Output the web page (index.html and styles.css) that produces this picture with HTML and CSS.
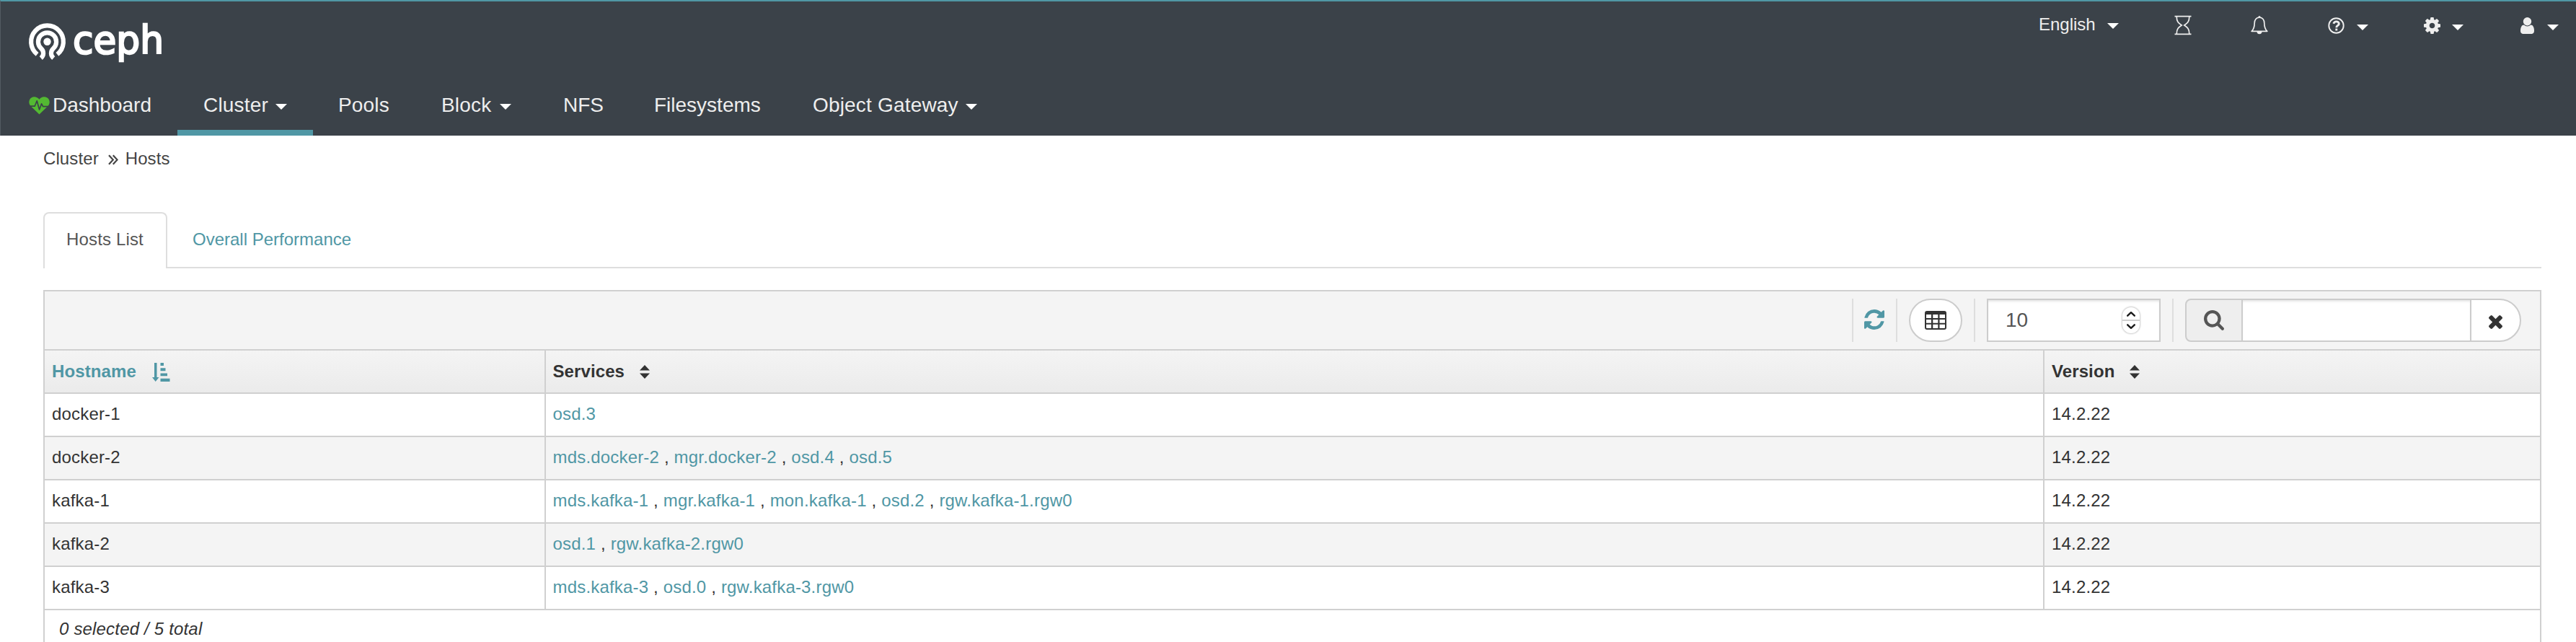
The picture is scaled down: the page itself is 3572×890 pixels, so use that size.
FILE: index.html
```html
<!DOCTYPE html>
<html lang="en">
<head>
<meta charset="utf-8">
<title>Ceph</title>
<link rel="stylesheet" href="styles.css">
</head>
<body>
<header class="header">
  <div class="topbar">
    <svg class="logo" width="194" height="66" viewBox="38 25 194 66">
      <g fill="none" stroke="#fff" stroke-width="6.2">
        <path d="M51.6 75.4A22.4 22.4 0 1 1 79.4 75.4"/>
        <path d="M56.8 80.6C61 77 61.2 71 57.2 67.4A12.6 12.6 0 1 1 73.8 67.4C69.8 71 70 77 74.2 80.6"/>
      </g>
      <circle cx="65.5" cy="57.8" r="5.2" fill="#fff"/>
      <text class="logo-text" x="101" y="74" textLength="126" lengthAdjust="spacingAndGlyphs">ceph</text>
    </svg>
    <div class="utils">
      <span class="lang">English</span><i class="caret lang-caret"></i>
      <svg class="u-task" width="24" height="28" viewBox="0 0 24 28" fill="none" stroke="#eee" stroke-width="1.7"><path d="M.5 1.7h23M.5 26.3h23M3.2 2c0 7 2.5 9 7 12-4.500 3-7 5-7 12M20.800 2c0 7-2.500 9-7 12 4.500 3 7 5 7 12"/></svg>
      <svg class="u-bell" width="24" height="28" viewBox="0 0 24 28"><path d="M12 3.200C7.500 3.200 5.200 6.600 5.200 11c0 6-1.500 9-4 11.300h21.600c-2.500-2.300-4-5.300-4-11.300 0-4.400-2.300-7.800-6.800-7.800z" fill="none" stroke="#eee" stroke-width="1.700" stroke-linejoin="round"/><circle cx="12" cy="2.400" r="1.500" fill="#eee"/><path d="M8.500 22.500h7a3.500 3.800 0 0 1-7 0z" fill="#eee"/></svg>
      <svg class="u-help" width="23" height="23" viewBox="0 0 23 23" fill="none" stroke="#eee"><circle cx="11.500" cy="11.500" r="10.200" stroke-width="1.900"/><path d="M7.700 8.800C8.500 6.700 9.900 5.900 11.600 5.900c2 0 3.700 1.200 3.700 3 0 2.600-3.500 2.500-3.500 5.300" stroke-width="2.900"/><path d="M11.800 15.600v2.900" stroke-width="2.900"/></svg><i class="caret"></i>
      <svg class="u-cog" width="23" height="23" viewBox="128 128 1536 1536" fill="#eee"><path d="M1152 896q0-106-75-181t-181-75-181 75-75 181 75 181 181 75 181-75 75-181zm512-109v222q0 12-8 23t-20 13l-185 28q-19 54-39 91 35 50 107 138 10 12 10 25t-9 23q-27 37-99 108t-94 71q-12 0-26-9l-138-108q-44 23-91 38-16 136-29 186-7 28-36 28h-222q-14 0-24.500-8.500t-11.500-21.500l-28-184q-49-16-90-37l-141 107q-10 9-25 9-14 0-25-11-126-114-165-168-7-10-7-23 0-12 8-23 15-21 51-66.500t54-70.500q-27-50-41-99l-183-27q-13-2-21-12.500t-8-23.500v-222q0-12 8-23t19-13l186-28q14-46 39-92-40-57-107-138-10-12-10-24 0-10 9-23 26-36 98.500-107.500t94.500-71.500q13 0 26 10l138 107q44-23 91-38 16-136 29-186 7-28 36-28h222q14 0 24.500 8.500t11.500 21.500l28 184q49 16 90 37l142-107q9-9 24-9 13 0 25 10 129 119 165 170 7 8 7 22 0 12-8 23-15 21-51 66.500t-54 70.500q26 50 41 98l183 28q13 2 21 12.500t8 23.500z"/></svg><i class="caret"></i>
      <svg class="u-user" width="19" height="23" viewBox="256 128 1280 1536" fill="#eee"><path d="M1536 1399q0 109-62.500 187t-150.500 78h-854q-88 0-150.500-78t-62.500-187q0-85 8.500-160.500t31.500-152 58.500-131 94-89 134.500-34.500q131 128 313 128t313-128q76 0 134.500 34.500t94 89 58.500 131 31.500 152 8.500 160.500zm-256-887q0 159-112.500 271.500t-271.500 112.500-271.500-112.500-112.500-271.500 112.500-271.500 271.500-112.500 271.500 112.500 112.500 271.500z"/></svg><i class="caret"></i>
    </div>
  </div>
  <nav class="nav">
    <a class="nav-item dash"><svg class="heart" width="29" height="25" viewBox="0 0 29 25"><path d="M14.500 24.500L2.500 13C-1 9 0 3.500 3.500 1.400 7.500-.9 12 .8 14.500 3.800 17-.0 21.500-.9 25.500 1.400 29 3.500 30 9 26.500 13z" fill="#53b932"/><path d="M0 13.200h8.200l3-7.400 3.400 12.200 3-8.200 2 3.800H29" fill="none" stroke="#3b4249" stroke-width="1.700" stroke-linejoin="round"/></svg>Dashboard</a>
    <a class="nav-item cluster active">Cluster<i class="caret"></i></a>
    <a class="nav-item pools">Pools</a>
    <a class="nav-item block">Block<i class="caret"></i></a>
    <a class="nav-item nfs">NFS</a>
    <a class="nav-item fs">Filesystems</a>
    <a class="nav-item gw">Object Gateway<i class="caret"></i></a>
  </nav>
</header>
<main class="main">
  <div class="crumbs"><span>Cluster</span><svg class="chev" width="14" height="15" viewBox="0 0 14 15" fill="none" stroke="#444" stroke-width="2.200"><path d="M1 1.200l5.800 6.300L1 13.800M6.800 1.200l5.800 6.300-5.800 6.300"/></svg><span>Hosts</span></div>
  <div class="tabs"><a class="tab current">Hosts List</a><a class="tab">Overall Performance</a></div>
  <section class="datatable">
    <div class="toolbar">
      <div class="tool refresh"><svg width="28" height="28" viewBox="128 128 1536 1536" fill="#5097a5"><path d="M1639 1056q0 5-1 7-64 268-268 434.500t-478 166.500q-146 0-282.500-55t-243.500-157l-129 129q-19 19-45 19t-45-19-19-45v-448q0-26 19-45t45-19h448q26 0 45 19t19 45-19 45l-137 137q71 66 161 102t187 36q134 0 250-65t186-179q11-17 53-117 8-23 30-23h192q13 0 22.500 9.500t9.500 22.500zm25-800v448q0 26-19 45t-45 19h-448q-26 0-45-19t-19-45 19-45l138-138q-148-137-349-137-134 0-250 65t-186 179q-11 17-53 117-8 23-30 23h-199q-13 0-22.500-9.500t-9.500-22.500v-7q65-268 270-434.500t480-166.500q146 0 284 55.500t245 156.500l130-129q19-19 45-19t45 19 19 45z"/></svg></div>
      <div class="tool columns"><span class="round-btn"><svg width="30" height="26" viewBox="0 0 30 26"><rect width="30" height="26" rx="3" fill="#333"/><path d="M2 5h7v5H2zM11.300 5h7v5h-7zM20.500 5h7.500v5h-7.500zM2 12h7v4.800H2zM11.300 12h7v4.800h-7zM20.500 12h7.500v4.800h-7.500zM2 18.800h7V24H3q-1 0-1-1zM11.300 18.800h7V24h-7zM20.500 18.800h7.500V23q0 1-1 1h-6.500z" fill="#fff"/></svg></span></div>
      <div class="tool size"><div class="num">10<span class="spin"><svg width="24" height="36" viewBox="0 0 24 36" fill="none" stroke="#1e1e1e" stroke-width="2.500" stroke-linecap="round" stroke-linejoin="round"><path d="M0 18h24" stroke="#d0d0d0" stroke-width="2"/><path d="M7.200 11.700L12 7.200l4.800 4.500M7.200 24.300l4.800 4.500 4.800-4.500"/></svg></span></div></div>
      <div class="tool search">
        <span class="addon"><svg width="28" height="28" viewBox="64 128 1664 1664" fill="#555"><path d="M1216 832q0-185-131.500-316.500t-316.500-131.500-316.500 131.500-131.500 316.500 131.500 316.500 316.500 131.500 316.500-131.500 131.500-316.500zm512 832q0 52-38 90t-90 38q-54 0-90-38l-343-342q-179 124-399 124-143 0-273.500-55.500t-225-150-150-225-55.500-273.500 55.500-273.500 150-225 225-150 273.500-55.500 273.500 55.500 225 150 150 225 55.500 273.500q0 220-124 399l343 343q37 37 37 90z"/></svg></span>
        <span class="field"></span>
        <span class="clear"><svg width="19" height="19" viewBox="302 366 1188 1188" fill="#333"><path d="M1490 1322q0 40-28 68l-136 136q-28 28-68 28t-68-28l-294-294-294 294q-28 28-68 28t-68-28l-136-136q-28-28-28-68t28-68l294-294-294-294q-28-28-28-68t28-68l136-136q28-28 68-28t68 28l294 294 294-294q28-28 68-28t68 28l136 136q28 28 28 68t-28 68l-294 294 294 294q28 28 28 68z"/></svg></span>
      </div>
    </div>
    <div class="row head">
      <div class="cell sorted">Hostname<svg class="amount" width="25" height="26" viewBox="0 0 25 26" fill="#5097a5"><path d="M3 0h3.500v20H9.500L4.700 26 0 20h3zM11.500 0H16v4h-4.500zM11.500 7.300h7v3.900h-7zM11.500 14.500H21v3.800h-9.500zM11.500 21.800H24.500V26h-13z"/></svg></div>
      <div class="cell">Services<svg class="sort" width="14" height="19" viewBox="0 0 14 19" fill="#333"><path d="M7 0l7 7.500H0zM0 11.500h14L7 19z"/></svg></div>
      <div class="cell">Version<svg class="sort" width="14" height="19" viewBox="0 0 14 19" fill="#333"><path d="M7 0l7 7.500H0zM0 11.500h14L7 19z"/></svg></div>
    </div>
    <div class="row"><div class="cell">docker-1</div><div class="cell"><p><a>osd.3</a></p></div><div class="cell">14.2.22</div></div>
    <div class="row even"><div class="cell">docker-2</div><div class="cell"><p><a>mds.docker-2</a> , <a>mgr.docker-2</a> , <a>osd.4</a> , <a>osd.5</a></p></div><div class="cell">14.2.22</div></div>
    <div class="row"><div class="cell">kafka-1</div><div class="cell"><p><a>mds.kafka-1</a> , <a>mgr.kafka-1</a> , <a>mon.kafka-1</a> , <a>osd.2</a> , <a>rgw.kafka-1.rgw0</a></p></div><div class="cell">14.2.22</div></div>
    <div class="row even"><div class="cell">kafka-2</div><div class="cell"><p><a>osd.1</a> , <a>rgw.kafka-2.rgw0</a></p></div><div class="cell">14.2.22</div></div>
    <div class="row"><div class="cell">kafka-3</div><div class="cell"><p><a>mds.kafka-3</a> , <a>osd.0</a> , <a>rgw.kafka-3.rgw0</a></p></div><div class="cell">14.2.22</div></div>
    <div class="foot">0 selected / 5 total</div>
  </section>
</main>
</body>
</html>
```
FILE: styles.css
```css
* { box-sizing: border-box; }
html, body { height: 890px; overflow: hidden; }
body {
  margin: 0;
  background: #fff;
  color: #333;
  font: 24px/34px "Liberation Sans", Arial, sans-serif;
  letter-spacing: .18px;
}
svg { display: block; flex: none; }

.header {
  height: 188px;
  background: #3b4249;
  border-top: 2px solid #5097a5;
  border-left: 1px solid #535b62;
  color: #eee;
}
.topbar { display: flex; justify-content: space-between; height: 98px; }
.logo { margin: 23px 0 0 37px; overflow: visible; }
.logo-text { font-family: "DejaVu Sans", sans-serif; font-size: 54px; fill: #fff; stroke: #fff; stroke-width: 2.4px; letter-spacing: 0; }
.caret { display: block; flex: none; width: 0; height: 0; border: 8px solid transparent; border-top-color: #fff; border-bottom: 0; }

.utils { display: flex; align-items: center; height: 66px; padding-right: 24px; }
.utils .caret { margin: 6px 0 0 17px; }
.lang { width: 77px; margin-top: -3px; white-space: nowrap; letter-spacing: 0; }
.utils .lang-caret { margin: 2px 0 0 18px; }
.u-task { margin-left: 77px; }
.u-bell { margin-left: 82px; }
.u-help { margin-left: 83px; }
.u-cog { margin-left: 77px; }
.u-user { margin-left: 79px; }
.utils .u-cog + .caret { margin-left: 16px; }
.utils .u-user + .caret { margin-left: 18px; }

.nav { display: flex; height: 88px; font-size: 28px; }
.nav-item { display: flex; align-items: center; flex: none; padding: 4px 0 0 36px; white-space: nowrap; }
.nav .caret { margin: 4px 36px 0 auto; }
.dash { width: 245px; padding-left: 39px; letter-spacing: 0; }
.heart { margin-right: 4px; }
.active { border-bottom: 8px solid #5097a5; padding-top: 12px; }
.cluster { width: 188px; }
.pools { width: 142px; padding-left: 35px; }
.block { width: 169px; }
.nfs { width: 126px; letter-spacing: 0; }
.fs { width: 220px; letter-spacing: 0; }
.gw { width: 300px; }

.main { padding: 0 48px 0 60px; }
.crumbs { display: flex; align-items: center; height: 66px; padding-bottom: 2px; color: #444; letter-spacing: .1px; }
.crumbs .chev { margin: 3px 10px 0 13px; }

.tabs { display: flex; height: 78px; margin-top: 40px; border-bottom: 2px solid #dedede; }
.tab { height: 78px; padding: 20px 30px 0 32px; line-height: 35px; color: #5097a5; letter-spacing: 0; }
.tab.current {
  width: 172px;
  margin-right: 3px;
  padding: 18px 0 0 30px;
  border: 2px solid #dedede;
  border-bottom: 0;
  border-radius: 8px 8px 0 0;
  background: #fff;
  color: #555;
  letter-spacing: .15px;
}

.datatable { margin-top: 30px; border: 2px solid #d0d0d0; border-bottom: 0; height: 500px; }
.toolbar { display: flex; justify-content: flex-end; height: 80px; padding: 10px 26px 10px 0; background: #f4f4f4; }
.tool { display: flex; align-items: center; height: 60px; border-left: 2px solid #dedede; }
.refresh { width: 61px; padding: 0 0 3px 15px; }
.columns { width: 108px; padding-left: 16px; }
.round-btn { display: flex; align-items: center; justify-content: center; width: 74px; height: 60px; border: 2px solid #ccc; border-radius: 30px; background: #fff; }
.size { width: 275px; padding-left: 16px; }
.num {
  display: flex;
  align-items: center;
  justify-content: space-between;
  width: 241px;
  height: 60px;
  padding: 0 27px 0 24px;
  border: 2px solid #ccc;
  background: #fff;
  box-shadow: inset 0 3px 3px -1px #e6e6e6;
  color: #555;
  font-size: 28px;
  letter-spacing: 0;
}
.spin { border-radius: 12px; box-shadow: 0 0 2px 1px #ccc; overflow: hidden; }
.search { width: 484px; padding-left: 16px; }
.search span { display: flex; height: 60px; border: 2px solid #ccc; }
.search .addon { width: 80px; padding: 14px 0 0 24px; border-radius: 8px 0 0 8px; background: #eee; }
.search .field { width: 317px; border-width: 2px 0; background: #fff; box-shadow: inset 0 3px 3px -1px #e6e6e6; }
.search .clear { width: 71px; padding: 21px 0 0 24px; border-radius: 0 30px 30px 0; background: #fff; }

.row { display: grid; grid-template-columns: 693px 2078px 1fr; height: 60px; border-top: 2px solid #d0d0d0; line-height: 56px; }
.row p { margin: 0; }
.row a { color: #5097a5; }
.even { background: #f4f4f4; }
.cell { padding-left: 9.5px; border-left: 2px solid #d0d0d0; white-space: nowrap; }
.cell:first-child { padding-left: 10px; border-left: 0; }
.cell:last-child { padding-left: 10px; }
.head { background: linear-gradient(#f4f4f4, #ebebeb); font-weight: 700; line-height: 58px; letter-spacing: .1px; }
.head .cell { display: flex; align-items: center; }
.sorted { color: #5097a5; }
.amount { margin-left: 22px; margin-top: 1px; }
.sort { margin-left: 21px; }
.foot { padding: 8px 0 0 20px; border-top: 2px solid #d0d0d0; font-style: italic; line-height: 36px; }
```
